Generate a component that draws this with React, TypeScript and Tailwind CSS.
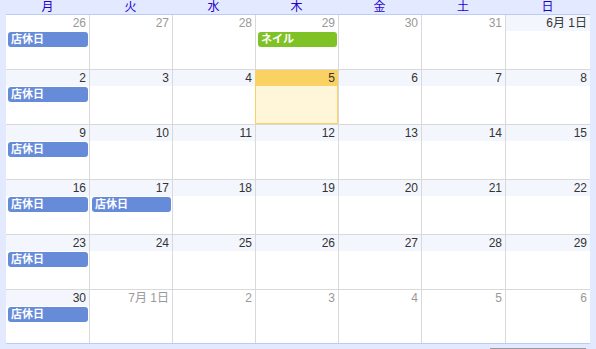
import React from "react";

type Ev = { title: string; color: string };
type Day = { label: string; other?: boolean; today?: boolean; events?: Ev[] };

const closed: Ev = { title: "店休日", color: "bg-[#668cd9]" };
const nail: Ev = { title: "ネイル", color: "bg-[#7ec225]" };

const headers = ["月", "火", "水", "木", "金", "土", "日"];

const weeks: Day[][] = [
  [
    { label: "26", other: true, events: [closed] },
    { label: "27", other: true },
    { label: "28", other: true },
    { label: "29", other: true, events: [nail] },
    { label: "30", other: true },
    { label: "31", other: true },
    { label: "6月 1日" },
  ],
  [
    { label: "2", events: [closed] },
    { label: "3" },
    { label: "4" },
    { label: "5", today: true },
    { label: "6" },
    { label: "7" },
    { label: "8" },
  ],
  [
    { label: "9", events: [closed] },
    { label: "10" },
    { label: "11" },
    { label: "12" },
    { label: "13" },
    { label: "14" },
    { label: "15" },
  ],
  [
    { label: "16", events: [closed] },
    { label: "17", events: [closed] },
    { label: "18" },
    { label: "19" },
    { label: "20" },
    { label: "21" },
    { label: "22" },
  ],
  [
    { label: "23", events: [closed] },
    { label: "24" },
    { label: "25" },
    { label: "26" },
    { label: "27" },
    { label: "28" },
    { label: "29" },
  ],
  [
    { label: "30", events: [closed] },
    { label: "7月 1日", other: true },
    { label: "2", other: true },
    { label: "3", other: true },
    { label: "4", other: true },
    { label: "5", other: true },
    { label: "6", other: true },
  ],
];

// column widths taken from the grid lines in the screenshot
const cols = "grid grid-cols-[83px_83px_83px_83px_83px_84px_1fr]";

function Cell({ day, first }: { day: Day; first: boolean }) {
  const stripBg = day.today ? "bg-[#fad163]" : day.other ? "bg-white" : "bg-[#f4f6fd]";
  return (
    <div
      className={
        "flex flex-col h-full " +
        (first ? "" : "border-l ") +
        (day.today
          ? "border-[#fad163] bg-[#fff6d9] shadow-[inset_0_-1px_0_#fad163,inset_-1px_0_0_#fad163]"
          : "border-[#d9d9d9] bg-white")
      }
    >
      <div
        className={
          "h-[16px] text-right pr-[3px] text-[12px] leading-[16px] " +
          stripBg +
          (day.other ? " text-[#999999]" : " text-[#333333]")
        }
      >
        {day.label}
      </div>
      {day.events?.map((ev, i) => (
        <div
          key={i}
          className={
            "mt-[1px] ml-[2px] mr-[1px] h-[15px] rounded-[3px] pl-[3px] text-white font-bold text-[11px] leading-[15px] " +
            ev.color
          }
        >
          {ev.title}
        </div>
      ))}
    </div>
  );
}

export default function App() {
  return (
    <div
      className="w-[596px] h-[349px] bg-[#e3e9ff] overflow-hidden"
      style={{ fontFamily: '"Liberation Sans", "Noto Sans CJK JP", sans-serif' }}
    >
      <div className="ml-[6px] w-[584px]">
        <div className={cols + " h-[14px] text-center text-[12px] leading-[14px] text-[#2200cc]"}>
          {headers.map((h) => (
            <div key={h}>{h}</div>
          ))}
        </div>
        <div className="bg-white border-t border-b border-[#bccbf2]">
          {weeks.map((week, wi) => (
            <div
              key={wi}
              className={
                cols +
                " " +
                (wi === 0 ? "h-[54px]" : wi === 5 ? "h-[54px] border-t border-[#d9d9d9]" : "h-[55px] border-t border-[#d9d9d9]")
              }
            >
              {week.map((d, di) => (
                <Cell key={di} day={d} first={di === 0} />
              ))}
            </div>
          ))}
        </div>
      </div>
      <div className="ml-[490px] mt-[4px] w-[96px] h-[2px] bg-[#999999]" />
    </div>
  );
}
